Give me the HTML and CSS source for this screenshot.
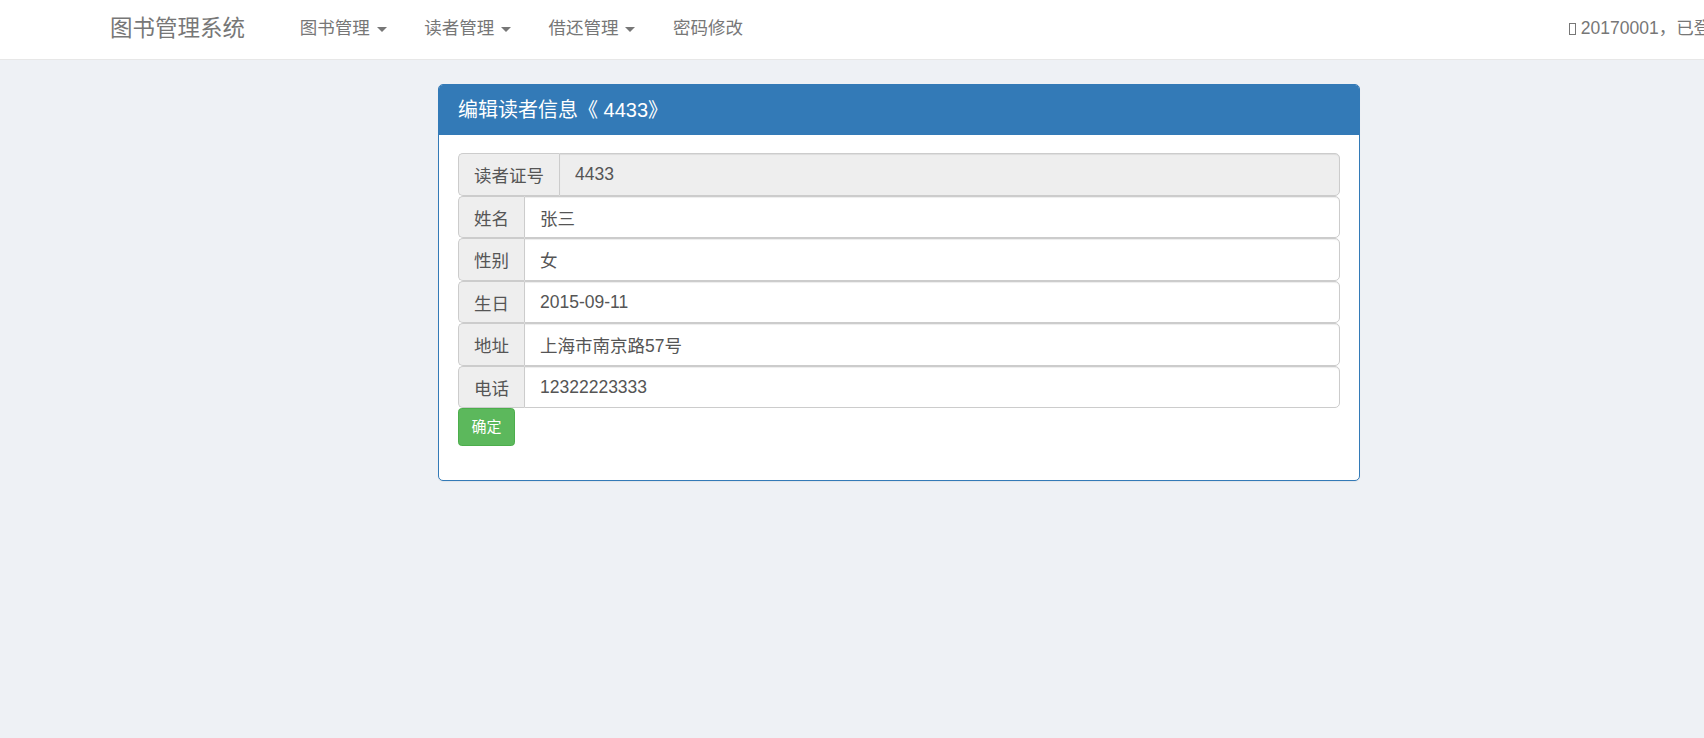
FILE: index.html
```html
<!DOCTYPE html>
<html lang="zh-CN">
<head>
<meta charset="utf-8">
<title>图书管理系统</title>
<link rel="stylesheet" href="styles.css">
</head>
<body>
<nav class="navbar">
  <div class="navbar-inner">
    <div class="navbar-left">
      <a class="brand" href="#">图书管理系统</a>
      <ul class="menu">
        <li><a href="#">图书管理 <span class="caret"></span></a></li>
        <li><a href="#">读者管理 <span class="caret"></span></a></li>
        <li><a href="#">借还管理 <span class="caret"></span></a></li>
        <li><a href="#">密码修改</a></li>
      </ul>
    </div>
    <div class="user-info"><span class="glyph-box"></span> 20170001，已登录</div>
  </div>
</nav>
<main class="main">
  <section class="panel">
    <div class="panel-heading"><h3 class="panel-title">编辑读者信息《 4433》</h3></div>
    <form class="panel-body">
      <div class="input-group">
        <span class="addon">读者证号</span>
        <input class="form-control readonly" type="text" value="4433" readonly>
      </div>
      <div class="input-group">
        <span class="addon">姓名</span>
        <input class="form-control" type="text" value="张三">
      </div>
      <div class="input-group">
        <span class="addon">性别</span>
        <input class="form-control" type="text" value="女">
      </div>
      <div class="input-group">
        <span class="addon">生日</span>
        <input class="form-control" type="text" value="2015-09-11">
      </div>
      <div class="input-group">
        <span class="addon">地址</span>
        <input class="form-control" type="text" value="上海市南京路57号">
      </div>
      <div class="input-group">
        <span class="addon">电话</span>
        <input class="form-control" type="text" value="12322223333">
      </div>
      <div class="actions">
        <button type="button" class="btn-success">确定</button>
      </div>
    </form>
  </section>
</main>
</body>
</html>
```
FILE: styles.css
```css
* { box-sizing: border-box; }
html, body {
  margin: 0;
  padding: 0;
}
body {
  background: #eef1f5;
  font-family: "Liberation Sans", "Noto Sans CJK SC", sans-serif;
  font-size: 17.5px;
  color: #333;
  overflow: hidden;
  height: 738px;
}
a { text-decoration: none; }

.navbar {
  background: #fff;
  border-bottom: 1px solid #e7e7e7;
  height: 60px;
  overflow: hidden;
}
.navbar-inner {
  display: flex;
  align-items: center;
  height: 57px;
  padding-left: 110px;
  width: 1900px;
}
.navbar-left {
  flex: 0 0 1459px;
  display: flex;
  align-items: center;
}
.brand {
  font-size: 22.5px;
  line-height: 25px;
  color: #777;
}
.menu {
  list-style: none;
  margin: 0 0 0 36px;
  padding: 0;
  display: flex;
}
.menu a {
  display: block;
  padding: 0 18.75px;
  line-height: 25px;
  color: #777;
  font-size: 17.5px;
}
.caret {
  display: inline-block;
  width: 0;
  height: 0;
  margin-left: 2px;
  vertical-align: middle;
  border-top: 5px solid #777;
  border-left: 5px solid transparent;
  border-right: 5px solid transparent;
}
.user-info {
  flex: 0 0 auto;
  white-space: nowrap;
  color: #777;
  font-size: 17.5px;
  line-height: 25px;
}
.glyph-box {
  display: inline-block;
  width: 7px;
  height: 12px;
  border: 1px solid #777;
  vertical-align: -1px;
}

.main {
  padding: 24px 0 0 438px;
}
.panel {
  width: 922px;
  background: #fff;
  border: 1px solid #337ab7;
  border-radius: 5px;
  box-shadow: 0 1px 1px rgba(0,0,0,.05);
}
.panel-heading {
  background: #337ab7;
  height: 49.5px;
  display: flex;
  align-items: center;
  padding: 0 19px;
  border-radius: 4px 4px 0 0;
}
.panel-title {
  margin: 0;
  font-weight: normal;
  font-size: 20px;
  color: #fff;
  line-height: 22px;
}
.panel-body {
  padding: 18.75px 19px 34.5px;
  margin: 0;
}
.input-group {
  display: flex;
  height: 42.5px;
}
.addon {
  display: flex;
  align-items: center;
  padding: 0 15px;
  background: #eee;
  border: 1px solid #ccc;
  border-right: 0;
  border-radius: 5px 0 0 5px;
  color: #555;
  font-size: 17.5px;
  white-space: nowrap;
}
.form-control {
  flex: 1;
  min-width: 0;
  height: 100%;
  margin: 0;
  padding: 0 15px;
  border: 1px solid #ccc;
  border-radius: 0 5px 5px 0;
  background: #fff;
  color: #555;
  font-family: inherit;
  font-size: 17.5px;
  box-shadow: inset 0 1px 1px rgba(0,0,0,.075);
  outline: none;
}
.form-control.readonly {
  background: #eee;
}
.actions {
  display: flex;
}
.btn-success {
  height: 37.5px;
  padding: 0 12.5px;
  background: #5cb85c;
  border: 1px solid #4cae4c;
  border-radius: 3.75px;
  color: #fff;
  font-family: inherit;
  font-size: 15px;
  line-height: 22.5px;
  cursor: pointer;
}
```
